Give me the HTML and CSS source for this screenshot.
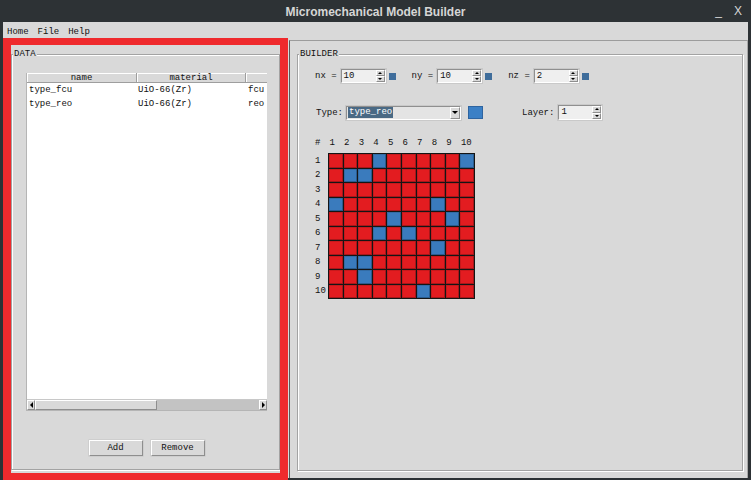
FILE: index.html
```html
<!DOCTYPE html>
<html>
<head>
<meta charset="utf-8">
<title>Micromechanical Model Builder</title>
<link rel="stylesheet" href="styles.css">
</head>
<body>
<div class="window">
  <div class="titlebar">
    <span></span>
    <span class="title">Micromechanical Model Builder</span>
    <span class="controls"><span class="min">_</span><span class="close">X</span></span>
  </div>
  <div class="client">
    <div class="menubar"><span>Home</span><span>File</span><span>Help</span></div>
    <div class="main">
      <div class="left">
        <div class="lf data">
          <span class="lf-label">DATA</span>
          <div class="listbox">
            <div class="lb-head">
              <div class="hc c1">name</div>
              <div class="hc c2">material</div>
              <div class="hc c3"></div>
            </div>
            <div class="lb-body">
              <div class="row"><span class="c1">type_fcu</span><span class="c2">UiO-66(Zr)</span><span class="c3">fcu</span></div>
              <div class="row"><span class="c1">type_reo</span><span class="c2">UiO-66(Zr)</span><span class="c3">reo</span></div>
            </div>
            <div class="hscroll">
              <div class="sarrow"><span class="tri-left"></span></div>
              <div class="thumb"></div>
              <div class="trough"></div>
              <div class="sarrow"><span class="tri-right"></span></div>
            </div>
          </div>
          <div class="buttons">
            <button class="btn">Add</button>
            <button class="btn">Remove</button>
          </div>
        </div>
        <div class="highlight"></div>
      </div>
      <div class="right">
        <div class="lf builder">
          <span class="lf-label">BUILDER</span>
          <div class="dims">
            <div class="dim">
              <span class="lbl">nx =</span>
              <div class="spin"><span class="val">10</span><span class="arrows"><span class="up"><i></i></span><span class="down"><i></i></span></span></div>
              <span class="sq"></span>
            </div>
            <div class="dim">
              <span class="lbl">ny =</span>
              <div class="spin"><span class="val">10</span><span class="arrows"><span class="up"><i></i></span><span class="down"><i></i></span></span></div>
              <span class="sq"></span>
            </div>
            <div class="dim">
              <span class="lbl">nz =</span>
              <div class="spin"><span class="val">2</span><span class="arrows"><span class="up"><i></i></span><span class="down"><i></i></span></span></div>
              <span class="sq"></span>
            </div>
          </div>
          <div class="typerow">
            <span class="lbl type-lbl">Type:</span>
            <div class="combo"><span class="sel">type_reo</span><span class="carrow"><i></i></span></div>
            <span class="colorbtn"></span>
            <span class="lbl layer-lbl">Layer:</span>
            <div class="spin layer"><span class="val">1</span><span class="arrows"><span class="up"><i></i></span><span class="down"><i></i></span></span></div>
          </div>
          <div class="gridwrap">
            <span class="hash">#</span>
            <div class="colnums">
              <span>1</span><span>2</span><span>3</span><span>4</span><span>5</span><span>6</span><span>7</span><span>8</span><span>9</span><span>10</span>
            </div>
            <div class="rownums">
              <span>1</span><span>2</span><span>3</span><span>4</span><span>5</span><span>6</span><span>7</span><span>8</span><span>9</span><span>10</span>
            </div>
            <div class="board">
              <i></i><i></i><i></i><i class="b"></i><i></i><i></i><i></i><i></i><i></i><i class="b"></i>
              <i></i><i class="b"></i><i class="b"></i><i></i><i></i><i></i><i></i><i></i><i></i><i></i>
              <i></i><i></i><i></i><i></i><i></i><i></i><i></i><i></i><i></i><i></i>
              <i class="b"></i><i></i><i></i><i></i><i></i><i></i><i></i><i class="b"></i><i></i><i></i>
              <i></i><i></i><i></i><i></i><i class="b"></i><i></i><i></i><i></i><i class="b"></i><i></i>
              <i></i><i></i><i></i><i class="b"></i><i></i><i class="b"></i><i></i><i></i><i></i><i></i>
              <i></i><i></i><i></i><i></i><i></i><i></i><i></i><i class="b"></i><i></i><i></i>
              <i></i><i class="b"></i><i class="b"></i><i></i><i></i><i></i><i></i><i></i><i></i><i></i>
              <i></i><i></i><i class="b"></i><i></i><i></i><i></i><i></i><i></i><i></i><i></i>
              <i></i><i></i><i></i><i></i><i></i><i></i><i class="b"></i><i></i><i></i><i></i>
            </div>
          </div>
        </div>
      </div>
    </div>
  </div>
</div>
</body>
</html>
```

FILE: styles.css
```css
* { box-sizing: border-box; }
html, body {
  margin: 0;
  padding: 0;
}
body {
  width: 751px;
  height: 480px;
  overflow: hidden;
  background: #2d3235;
  font-family: "Liberation Mono", "DejaVu Sans Mono", monospace;
  font-size: 9px;
  color: #111;
}
.window {
  display: flex;
  flex-direction: column;
  height: 480px;
}
.titlebar {
  height: 22px;
  display: grid;
  grid-template-columns: 1fr auto 1fr;
  align-items: center;
  color: #d6d6d6;
  font-family: "Liberation Sans", Arial, sans-serif;
  font-weight: bold;
  font-size: 12px;
}
.title { padding-top: 1px; }
.controls {
  justify-self: end;
  display: flex;
  gap: 12px;
  padding-right: 9px;
  font-weight: normal;
  font-size: 12px;
}
.client {
  flex: 1;
  margin: 0 3px 2px 3px;
  background: #d9d9d9;
  display: flex;
  flex-direction: column;
}
.menubar {
  height: 18px;
  padding: 4px 0 0 4px;
  display: flex;
  gap: 9px;
  font-size: 9px;
  line-height: 12px;
}
.main {
  flex: 1;
  display: flex;
  min-height: 0;
}
.left {
  width: 286px;
  position: relative;
  padding: 14px 9px 8px 8px;
  display: flex;
}
.highlight {
  position: absolute;
  left: 0;
  top: -2px;
  width: 285px;
  bottom: -2px;
  border: 7px solid #ef2a2d;
  border-left-width: 8px;
  border-right-width: 8px;
  pointer-events: none;
}
.lf {
  position: relative;
  flex: 1;
  border: 1px solid #a3a3a3;
  box-shadow: inset 1px 1px 0 #ffffff, 1px 1px 0 #ffffff;
}
.lf-label {
  position: absolute;
  top: -6px;
  left: 1px;
  padding: 0 1px;
  line-height: 11px;
  background: #d9d9d9;
}
.data {
  padding: 18px 0 0 14px;
}
.listbox {
  width: 241px;
  border-left: 1px solid #b5b5b5;
  border-bottom: 1px solid #b5b5b5;
  background: #ffffff;
}
.lb-head {
  display: flex;
  height: 10px;
  background: #d9d9d9;
}
.hc {
  height: 10px;
  line-height: 10px;
  text-align: center;
  border-right: 1px solid #9e9e9e;
  border-bottom: 1px solid #9e9e9e;
  box-shadow: inset 1px 1px 0 #ffffff;
}
.hc.c1 { width: 110px; }
.hc.c2 { width: 109px; }
.hc.c3 { flex: 1; border-right: none; }
.lb-body {
  height: 317px;
  border-bottom: 1px solid #c8c8c8;
}
.row {
  display: flex;
  height: 14px;
  line-height: 14px;
  white-space: nowrap;
  overflow: hidden;
}
.row .c1 { width: 110px; padding-left: 2px; }
.row .c2 { width: 109px; padding-left: 1px; }
.row .c3 { flex: 1; padding-left: 2px; }
.hscroll {
  display: flex;
  height: 10px;
  background: #c3c3c3;
}
.sarrow {
  width: 8px;
  height: 10px;
  background: #d9d9d9;
  border: 1px solid;
  border-color: #ffffff #8e8e8e #8e8e8e #ffffff;
  display: flex;
  align-items: center;
  justify-content: center;
}
.tri-left {
  width: 0; height: 0;
  border-top: 3px solid transparent;
  border-bottom: 3px solid transparent;
  border-right: 3px solid #000;
}
.tri-right {
  width: 0; height: 0;
  border-top: 3px solid transparent;
  border-bottom: 3px solid transparent;
  border-left: 3px solid #000;
}
.thumb {
  width: 122px;
  height: 10px;
  background: #d9d9d9;
  border: 1px solid;
  border-color: #ffffff #8e8e8e #8e8e8e #ffffff;
}
.trough { flex: 1; }
.buttons {
  width: 241px;
  margin-top: 29px;
  display: flex;
  justify-content: center;
  gap: 8px;
}
.btn {
  width: 54px;
  height: 16px;
  padding: 0;
  font-family: "Liberation Mono", "DejaVu Sans Mono", monospace;
  font-size: 9px;
  line-height: 14px;
  color: #111;
  background: #d9d9d9;
  border: 1px solid;
  border-color: #ffffff #8e8e8e #8e8e8e #ffffff;
  box-shadow: 0 0 0 0.5px #c4c4c4;
}
.right {
  flex: 1;
  border-top: 1px solid #9c9c9c;
  border-left: 1px solid #5a5a5a;
  border-right: 1px solid #a8a8a8;
  padding: 13px 4px 7px 7px;
  display: flex;
}
.builder {
  padding: 14px 0 0 17px;
}
.lbl { white-space: pre; line-height: 12px; }
.dims {
  display: flex;
  gap: 16px;
  height: 14px;
  align-items: center;
}
.dim {
  display: flex;
  align-items: center;
}
.dim .lbl { margin-right: 4px; }
.spin {
  width: 45px;
  height: 14px;
  display: flex;
  background: #efefef;
  border: 1px solid;
  border-color: #8f8f8f #ffffff #ffffff #8f8f8f;
  box-shadow: 0 0 0 1px #c9c9c9;
}
.spin .val {
  flex: 1;
  padding-left: 2px;
  line-height: 12px;
}
.arrows {
  width: 9px;
  display: flex;
  flex-direction: column;
}
.arrows > span {
  flex: 1;
  background: #d9d9d9;
  border: 1px solid;
  border-color: #ffffff #8e8e8e #8e8e8e #ffffff;
  display: flex;
  align-items: center;
  justify-content: center;
}
.arrows .up i {
  width: 0; height: 0;
  border-left: 2px solid transparent;
  border-right: 2px solid transparent;
  border-bottom: 2px solid #000;
}
.arrows .down i {
  width: 0; height: 0;
  border-left: 2px solid transparent;
  border-right: 2px solid transparent;
  border-top: 2px solid #000;
}
.sq {
  width: 7px;
  height: 7px;
  margin-left: 3px;
  background: #3f6d9b;
}
.typerow {
  margin-top: 22px;
  height: 15px;
  display: flex;
  align-items: center;
}
.type-lbl { margin-left: 1px; margin-right: 3px; }
.combo {
  width: 115px;
  height: 14px;
  display: flex;
  align-items: center;
  padding-left: 1px;
  background: #e4e4e4;
  border: 1px solid;
  border-color: #8f8f8f #ffffff #ffffff #8f8f8f;
  box-shadow: 0 0 0 1px #c9c9c9;
}
.sel {
  background: #4a6984;
  color: #ffffff;
  line-height: 11px;
  padding: 0 1px;
}
.carrow {
  margin-left: auto;
  width: 10px;
  height: 12px;
  background: #d9d9d9;
  border: 1px solid;
  border-color: #ffffff #8e8e8e #8e8e8e #ffffff;
  display: flex;
  align-items: center;
  justify-content: center;
}
.carrow i {
  width: 0; height: 0;
  border-left: 3px solid transparent;
  border-right: 3px solid transparent;
  border-top: 3px solid #000;
}
.colorbtn {
  width: 15px;
  height: 13px;
  margin-left: 7px;
  background: #3b80c6;
  border: 1px solid #2e64a0;
}
.layer-lbl { margin-left: 39px; margin-right: 4px; }
.spin.layer { width: 44px; height: 15px; }
.gridwrap {
  margin-top: 17px;
  display: grid;
  grid-template-columns: 13px 147px;
  grid-template-rows: 16px 146px;
}
.hash { line-height: 12px; }
.colnums {
  display: grid;
  grid-template-columns: repeat(10, 1fr);
  column-gap: 1px;
  padding: 0 1px;
  line-height: 12px;
}
.colnums span { padding-left: 0.5px; }
.rownums {
  display: grid;
  grid-template-rows: repeat(10, 1fr);
  row-gap: 1px;
  padding: 1px 0;
  align-items: center;
  line-height: 12px;
}
.board {
  display: grid;
  grid-template-columns: repeat(10, 1fr);
  grid-template-rows: repeat(10, 1fr);
  gap: 1px;
  padding: 1px;
  background: #151515;
}
.board i {
  display: block;
  background: #e31c20;
  box-shadow: inset -1px -1px 0 #a8171a, inset 1px 1px 0 #c8191c;
}
.board i.b {
  background: #3a7bbd;
  box-shadow: inset -1px -1px 0 #2a5c8f, inset 1px 1px 0 #336ca5;
}
```
